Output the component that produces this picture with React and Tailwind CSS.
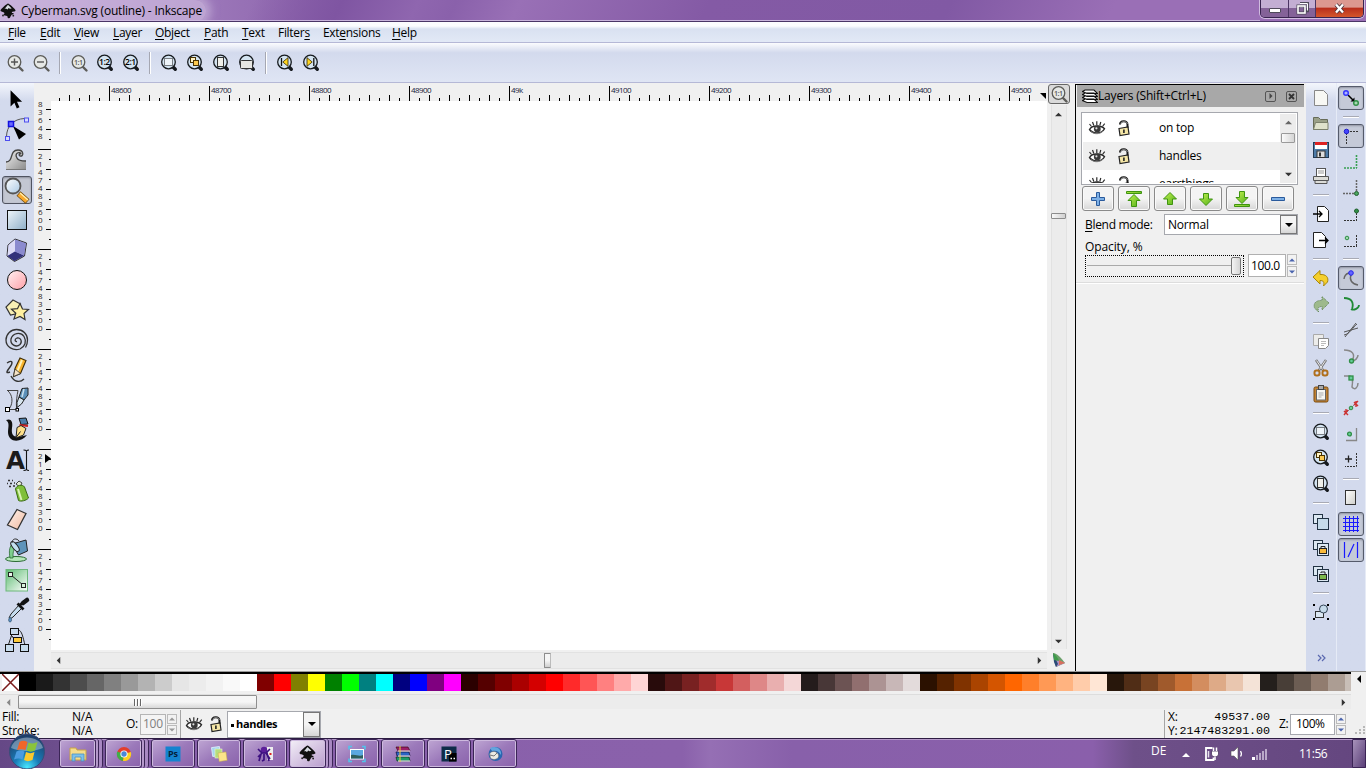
import clsx from "clsx";

const UI_FONT = "font-['Open_Sans','Noto_Sans',sans-serif]";

const menus = [
  { label: "File", key: 0, w: "w-[32px]" },
  { label: "Edit", key: 0, w: "w-[34px]" },
  { label: "View", key: 0, w: "w-[39px]" },
  { label: "Layer", key: 0, w: "w-[42px]" },
  { label: "Object", key: 0, w: "w-[49px]" },
  { label: "Path", key: 0, w: "w-[38px]" },
  { label: "Text", key: 0, w: "w-[36px]" },
  { label: "Filters", key: 6, w: "w-[45px]" },
  { label: "Extensions", key: 3, w: "w-[69px]" },
  { label: "Help", key: 0, w: "w-[30px]" },
];

const palette = (
  "000000 1a1a1a 333333 4d4d4d 666666 808080 999999 b3b3b3 cccccc e6e6e6 ececec f2f2f2 f9f9f9 ffffff " +
  "800000 ff0000 808000 ffff00 008000 00ff00 008080 00ffff 000080 0000ff 800080 ff00ff " +
  "2b0000 550000 800000 aa0000 d40000 ff0000 ff2a2a ff5555 ff8080 ffaaaa ffd5d5 " +
  "280b0b 501616 782121 a02c2c c83737 d35f5f de8787 e9afaf f4d7d7 " +
  "241c1c 483737 6c5353 916f6f ac9393 c8b7b7 e3dbdb " +
  "2b1100 552200 803300 aa4400 d45500 ff6600 ff7f2a ff9955 ffb380 ffccaa ffe6d5 " +
  "28170b 502d16 784421 a05a2c c87137 d38d5f deaa87 e9c6af f4e3d7 " +
  "241f1c 483e37 6c5d53 917c6f ac9d93 c8beb7"
).split(" ");

/* ---------- icons ---------- */

function Svg({ size = 24, className, children }) {
  return (
    <svg
      width={size}
      height={size}
      viewBox={`0 0 ${size} ${size}`}
      fill="none"
      className={clsx("shrink-0", className)}
    >
      {children}
    </svg>
  );
}

// shared lens used by every zoom command
function Lens({ children, off }) {
  const line = off ? "#5c5c58" : "#161a1e";
  return (
    <Svg>
      <path
        d={off ? "M15 15l4.500 4.500" : "M16 16l2.300 2.300"}
        stroke={line}
        strokeWidth={off ? 2.4 : 3.4}
        strokeLinecap="round"
      />
      <circle cx="11.500" cy="11" r={off ? 6.3 : 6.8} fill={off ? "#e6e8e6" : "#d4e4f1"} stroke={line} strokeWidth="1.300" />
      {children}
    </Svg>
  );
}

function LensText({ text, off }) {
  return (
    <Lens off={off}>
      <text
        x="11.300"
        y={off ? 13.5 : 14}
        textAnchor="middle"
        fontSize={off ? 7 : 8.5}
        fontWeight="600"
        letterSpacing="-.5"
        fontFamily="Open Sans, sans-serif"
        fill={off ? "#555" : "#000"}
      >
        {text}
      </text>
    </Lens>
  );
}

const ZoomIn = () => <Lens off><path d="M8 11h7M11.500 7.500v7" stroke="#555" strokeWidth="1.400" /></Lens>;
const ZoomOut = () => <Lens off><path d="M8 11h7" stroke="#555" strokeWidth="1.400" /></Lens>;
const ZoomSel = () => <Lens><rect x="7.500" y="7.500" width="8" height="7" fill="#eef4f9" stroke="#111" strokeDasharray="1 1" /></Lens>;
const ZoomDraw = () => (
  <Lens>
    <rect x="7.500" y="6.500" width="5" height="5" fill="#fff3c4" stroke="#4a3300" />
    <rect x="10.500" y="9.500" width="5" height="5" fill="#fcc94f" stroke="#4a3300" />
  </Lens>
);
const ZoomPage = () => <Lens><rect x="8.500" y="6.500" width="6" height="9" fill="#f0f0ea" stroke="#333" /></Lens>;
const ZoomWidth = () => <Lens><rect x="5.500" y="9.500" width="12" height="8" rx="1" fill="#e6e6e2" stroke="#333" /></Lens>;
const ZoomPrev = () => <Lens><path d="M8.500 7v8" stroke="#111" strokeWidth="1.300" /><path d="M15 6.700v8.600L9.800 11z" fill="#ffd51e" stroke="#332600" strokeWidth=".8" /></Lens>;
const ZoomNext = () => <Lens><path d="M14.800 7v8" stroke="#111" strokeWidth="1.300" /><path d="M8 6.700v8.600l5.200-4.300z" fill="#ffd51e" stroke="#332600" strokeWidth=".8" /></Lens>;

const Inkscape = ({ size = 16 }) => (
  <svg width={size} height={size} viewBox="0 0 16 16">
    <path d="M8 .5c1 0 7.500 5.500 7.500 7.100 0 1.300-3.700.9-3.700 1.900 0 .7 2 .5 2 1.300 0 .9-2.600.5-2.600 1.500 0 1-.9 1.200-1.100 2.200-.2.800-1.300 1.100-2.100.6-1-.6.2-1.500-1-2.100-.9-.5-3.400-.2-3.400-1.300 0-.9 1.300-1.100.8-1.800C3.700 9 .5 8.900.5 7.600.5 6 7 .5 8 .5z" fill="#111" />
    <path d="M8 1.800l3.700 3.600-1.800.4-1.300-.7-1 1.400-1.800-.9-1.300.4z" fill="#d8dce2" />
    <circle cx="3" cy="12.500" r=".9" fill="#222" />
    <circle cx="13.300" cy="12.700" r=".9" fill="#222" />
  </svg>
);

const Eye = () => (
  <Svg size={18}>
    <path d="M1.500 10.500C4 6 13.500 6 16.500 9.800c-2.500 5-11.500 5.700-15 .7z" fill="#fff" stroke="#2a2a2a" strokeWidth="1.400" />
    <circle cx="9.300" cy="10" r="3.400" fill="#3a3a3a" />
    <circle cx="8.400" cy="9.300" r="1.100" fill="#ddd" />
    <path d="M3.500 7.500L1.500 5M5.800 6.500L4.500 3M8.800 6V2.300M11.800 6.300L12.800 3M14.500 7.500l2.200-2.800" stroke="#2a2a2a" strokeWidth="1.200" />
    <path d="M3 12.500c3 3 9 3 12-.5" stroke="#777" />
  </Svg>
);

const Lock = () => (
  <Svg size={18}>
    <path d="M5 5.500C5 1.500 12.500.8 12.500 5.500V9" stroke="#1c1c1c" strokeWidth="2" />
    <path d="M5.500 4.500C6.500 2 12 1.800 12.400 5" stroke="#ccc" strokeWidth=".6" />
    <path d="M4 9.500l9-1.500 1 7-9 1.500z" fill="#f5e6a6" stroke="#222" strokeWidth="1.200" />
    <path d="M8.900 10.500v3.500" stroke="#222" strokeWidth="1.600" />
  </Svg>
);

const LayersIcon = () => (
  <Svg size={16}>
    <path
      d="M.5 12.500L3 11h9l3.500 3.500H5zM.5 9.500L3 8h9l3.500 3.500H5zM.5 6.500L3 5h9l3.500 3.500H5zM.5 3.500L3 2h9l3.500 3.500H5z"
      fill="#fff"
      stroke="#111"
      strokeWidth="1.100"
    />
  </Svg>
);

/* ---------- toolbox ---------- */

const tools = [
  // selector
  <path d="M11 5v17l4-4 2.500 6 2.800-1.300-2.600-5.700H23z" fill="#000" transform="translate(0 .500) scale(.96)" />,
  // node editor
  <>
    <path d="M6.500 22c0-11 7-18 18-18.500" stroke="#555" />
    <path d="M13 11l13 8-7 5.500z" fill="#000" />
    <rect x="8.500" y="6.500" width="5" height="5" fill="#6b6bff" stroke="#1111e0" strokeWidth="1.500" />
    <rect x="24.500" y="3" width="4" height="4" fill="#d5d9ff" stroke="#4d4dee" />
    <rect x="5.500" y="21.500" width="4" height="4" fill="#d5d9ff" stroke="#4d4dee" />
  </>,
  // tweak
  <>
    <path d="M6 17c8 0 3-12 12-12 6 0 6 7 2 6-2-1 0-3 1-2-1-3-7-1-4 4 1 3 5 3 9 3v9H6z" fill="url(#wave)" />
    <path d="M6 17c8 0 3-12 12-12 6 0 6 7 2 6-2-1 0-3 1-2-1-3-7-1-4 4 1 3 5 3 9 3" stroke="#444" strokeWidth="1.300" />
    <path d="M6 24.500h20" stroke="#777" />
  </>,
  // zoom
  <>
    <path d="M18.500 18.500l9 8" stroke="#6b4a12" strokeWidth="6" />
    <path d="M19 19l8 7" stroke="#f9a92c" strokeWidth="4.500" />
    <path d="M20 18l8 7" stroke="#fff0b0" strokeWidth="1.200" />
    <circle cx="13" cy="11" r="7.500" fill="url(#glass)" stroke="#555" strokeWidth="1.800" />
  </>,
  // rectangle
  <rect x="7.500" y="5.500" width="19" height="19" fill="url(#steel)" stroke="#111" />,
  // 3d box
  <>
    <path d="M15 4l11.500 4-2 13-10 5.500-7.500-5.500 1-11z" fill="#9b9bdc" stroke="#333" />
    <path d="M15 4.500v12l-7.500 4.500 1-11z" fill="#dcdcf6" />
    <path d="M15 16.500l9 4-9.500 5.500-7-5z" fill="#32327a" />
    <path d="M15 4.500l11 4-2 12-9-4z" fill="#8b8bcf" />
  </>,
  // ellipse
  <circle cx="17" cy="15" r="9.500" fill="url(#pink)" stroke="#111" />,
  // star
  <>
    <path d="M13 5l7.500 4-1 9-9 2-4.500-8z" fill="#f8efb4" stroke="#333" strokeWidth="1.200" />
    <path d="M20 8.500l2.500 5.500 6 .5-4.500 4 1 6-5-3-6 2.500 1.800-5.800-4.300-4 6-.5z" fill="#fff0a0" stroke="#333" strokeWidth="1.200" />
  </>,
  // spiral
  <path d="M17 16.500c-2 .5-3-2.500 0-3.500 4-1 5.500 4 3 6.500-4 3.500-10 0-9-5.500 1.500-6 9.500-7.500 13-2.500 3 5 1 10-4 12.500C13 26 6 22 6 15c0-6 5-10.500 10.500-10.500C23 4.500 27.500 9 27.500 15c0 3-.5 5-2 7.500" stroke="#333" strokeWidth="1.300" />,
  // pencil
  <>
    <path d="M7 8c6-4 6 0 3 4s-5 7 0 5M11 21c3 6 9 7 13 3" stroke="#333" strokeWidth="1.400" />
    <path d="M20 3l6 2.500-5.500 13-7 3 1.500-8z" fill="#f7b22c" stroke="#3d2c05" strokeWidth="1.100" />
    <path d="M22 5l-5 12" stroke="#fff1b5" strokeWidth="2" />
    <path d="M15 14l5.500 4.500-7 3z" fill="#f5e2c4" stroke="#333" strokeWidth=".8" />
  </>,
  // bezier
  <>
    <path d="M7 5.500h11M7.500 5.500c5 4 6 12 2 18M18 5.500c-1 5-2 11-1.500 18M9 24.500h8" stroke="#444" />
    <path d="M22 3.500l6-.5v7l-4 5-5-3z" fill="#5c8fb8" stroke="#222" />
    <path d="M24 4l-2 8" stroke="#c9dfee" strokeWidth="1.500" />
    <path d="M19 12l5 3-2.500 4-4.500 3.500 0-5z" fill="#d8e6f0" stroke="#222" />
    <rect x="5.500" y="22.500" width="4" height="4" fill="#fff" stroke="#000" />
    <rect x="16" y="23.500" width="2.500" height="2.500" fill="#fff" stroke="#000" />
  </>,
  // calligraphy
  <>
    <path d="M6 5c6-2.500 7 3 6 8-1 8 2 11 15 7-6 8-19 8-19-3 0-5 2-9-2-12z" fill="#111" />
    <path d="M19 3.500l7-.5 2 6-7 .5z" fill="#4b7da8" stroke="#111" />
    <path d="M19.500 10l8.500 1" stroke="#c22" strokeWidth="1.800" />
    <path d="M17 12.500l4-2 5 3-2.500 6.500-7.500 3z" fill="#ffe08a" stroke="#222" />
    <path d="M16 22.500l4.500-6" stroke="#222" />
  </>,
  // text
  <>
    <path d="M26.500 5.500v19M23.500 5c1.500 0 2.500.3 3 1 .5-.7 1-1 2.500-1M23.500 25.500c1.500 0 2.500-.3 3-1 .5.700 1 1 2.500 1" stroke="#111" strokeWidth="1.100" />
    <text x="6" y="23.500" fontFamily="DejaVu Sans, sans-serif" fontWeight="700" fontSize="24" textLength="19" lengthAdjust="spacingAndGlyphs" fill="#1b1b1b">A</text>
  </>,
  // spray
  <>
    <path d="M8 5.500h2M12 5.500h1M7 8.500h1M10 8.500h2M14 8h1M9 11.500h2M13 11h2" stroke="#333" strokeWidth="1.600" />
    <path d="M16 9l3-3 3 2-2 4z" fill="#e4ecd8" stroke="#444" />
    <path d="M15.500 14c1-4 7-5 9-2l4 11c-2 2.500-8 4-10 2.500z" fill="#7fbf3a" stroke="#3a6b12" />
    <path d="M18 14l3.500 11" stroke="#d9f2b4" strokeWidth="2" />
  </>,
  // eraser
  <path d="M17 4.500l9 4-8.500 16-10-4.500z" fill="url(#eraser)" stroke="#333" strokeWidth="1.300" />,
  // bucket
  <>
    <ellipse cx="16" cy="24" rx="10.500" ry="2.500" fill="#b4e8b9" stroke="#2b6b33" />
    <path d="M12 9c-3 4-3 8-2 14h3c0-5 0-8 3-11z" fill="#7fcf8e" stroke="#2b6b33" strokeWidth=".8" />
    <path d="M12 9l14-4 1.500 11-9 4z" fill="#5e94ba" stroke="#222" />
    <ellipse cx="15" cy="11.500" rx="2.500" ry="6" transform="rotate(-38 15 11.500)" fill="#c4dff0" stroke="#222" />
    <path d="M12 8c0-5 5-5 7-2" stroke="#333" />
  </>,
  // gradient
  <>
    <rect x="6" y="4.500" width="21.500" height="21.500" fill="url(#green)" stroke="#6cb77b" />
    <path d="M11 10l12 10" stroke="#222" />
    <rect x="8.500" y="7.500" width="4" height="4" fill="#e7f7e9" stroke="#222" />
    <rect x="21.500" y="18.500" width="4" height="4" fill="#d9f2dc" stroke="#222" />
  </>,
  // dropper
  <>
    <path d="M19 10l3 3-9 9-3 2-1-1 2-4z" fill="#c6dcee" stroke="#222" />
    <path d="M17.500 8.500l6 6M20 10l5-4" stroke="#111" strokeWidth="2.800" />
    <path d="M23 8l4-3" stroke="#111" strokeWidth="4.500" strokeLinecap="round" />
    <path d="M10 22c3 3 1 5 0 5s-2.500-2 0-5z" fill="#5d8fc4" stroke="#245" strokeWidth=".6" />
  </>,
  // connector
  <>
    <path d="M12 9L8 21M18 5c4 0 5 8 7 15M12 11l4 6" stroke="#222" />
    <rect x="10.500" y="3.500" width="8" height="6" fill="#c7dbec" stroke="#111" />
    <rect x="13.500" y="12.500" width="8" height="5" fill="#ffcc3c" stroke="#111" />
    <rect x="5.500" y="19.500" width="8" height="7" fill="#c7dbec" stroke="#111" />
    <rect x="20.500" y="19.500" width="8" height="7" fill="#c7dbec" stroke="#111" />
  </>,
];

function Gradients() {
  const defs = [
    ["glass", "#ffffff", "#a9c8e4"],
    ["steel", "#eef5fa", "#8fafc8"],
    ["pink", "#fff2f2", "#ff9fa8"],
    ["eraser", "#fff4ee", "#f0b9a0"],
    ["green", "#5dbb72", "#ffffff"],
    ["wave", "#f2f2f2", "#8a8a8a"],
    ["leaf", "#c4f250", "#52b01a"],
    ["paper", "#ffffff", "#cfcfca"],
  ];
  return (
    <svg width="0" height="0" className="absolute">
      <defs>
        {defs.map(([id, from, to]) => (
          <linearGradient key={id} id={id} x1="0" y1="0" x2="1" y2="1">
            <stop offset="0" stopColor={from} />
            <stop offset="1" stopColor={to} />
          </linearGradient>
        ))}
      </defs>
    </svg>
  );
}

function Toolbox() {
  return (
    <div className="flex w-[34px] shrink-0 flex-col bg-linear-to-b from-[#f3f6fc] via-[#d3daed] via-3% to-[#d3daed] pt-[2px]">
      {tools.map((art, i) => (
        <div key={i} className="relative flex h-[30px] w-[34px] shrink-0 items-center">
          {i === 3 && (
            <div className="absolute inset-x-[2px] top-[1px] h-[28px] rounded-[3px] border border-[#4f5360] bg-[#c3c7d2] shadow-[inset_0_1px_2px_#8d909c]" />
          )}
          <svg width="34" height="30" viewBox="0 0 34 30" fill="none" className="relative">
            {art}
          </svg>
        </div>
      ))}
    </div>
  );
}

/* ---------- top bars ---------- */

function TitleBar() {
  return (
    <div className="flex h-[22px] items-start justify-between overflow-hidden border-b border-[#4a3566] bg-linear-to-r from-[#b79bd0] from-0% via-[#8a60aa] via-25% to-[#a06fb9]">
      <div className="flex h-full flex-1 items-start bg-[linear-gradient(115deg,transparent_14%,#ffffff00_20%,#7f55a2_27%,#8f66af_33%,#8a61ab_36%,#9970b6_41%,#845aa5_56%,#8159a4_75%,#9a6fb6_88%)] shadow-[inset_0_-1px_0_#c9b4dc]">
        <div className="flex items-center gap-[5px] rounded-r-full bg-[#d3c2e2]/60 pr-1 shadow-[0_0_8px_5px_#d3c2e290]">
          <Inkscape />
          <span className="h-[22px] text-[12px] leading-[22px] tracking-[-0.2px] text-black">Cyberman.svg (outline) - Inkscape</span>
        </div>
      </div>
      <div className="flex h-[22px] bg-[#9a6fb6] pr-[2px]">
        <div className="flex h-[18px] overflow-hidden rounded-b-[5px] border border-t-0 border-[#38244f] shadow-[0_0_0_1px_#d0bcdf]">
          <div className="flex w-[28px] items-center justify-center border-r border-[#4b3562] bg-linear-to-b from-[#c3aed3] from-45% to-[#846298] to-50% pt-[3px]">
            <div className="h-[5px] w-[12px] rounded-[1px] border border-[#4f4a5a] bg-white" />
          </div>
          <div className="flex w-[27px] items-center justify-center border-r border-[#4b3562] bg-linear-to-b from-[#c3aed3] from-45% to-[#846298] to-50%">
            <svg width="13" height="13" viewBox="0 0 13 13" fill="none">
              <path d="M4 1h8v8h-2" stroke="#4f4a5a" strokeWidth="2.500" />
              <path d="M4 1.500h7.500v7" stroke="#fff" />
              <rect x="2" y="4" width="7" height="7" stroke="#4f4a5a" strokeWidth="3" />
              <rect x="2" y="4" width="7" height="7" stroke="#fff" strokeWidth="1.600" />
            </svg>
          </div>
          <div className="flex w-[47px] items-center justify-center bg-linear-to-b from-[#dc9890] from-40% via-[#b92f1d] via-50% to-[#d4562c]">
            <svg width="13" height="11" viewBox="0 0 13 11">
              <path d="M3 1.500l7 8M10 1.500l-7 8" stroke="#4d3840" strokeWidth="4" />
              <path d="M3 1.500l7 8M10 1.500l-7 8" stroke="#fff" strokeWidth="2.300" />
            </svg>
          </div>
        </div>
      </div>
    </div>
  );
}

function MenuBar() {
  return (
    <div className="flex h-[21px] items-center border-b border-[#b5b8d6] bg-linear-to-b from-[#fbfcfe] from-20% via-[#d9e1f1] via-35% to-[#e2e9f6] pt-[2px] pl-[8px] text-[12px] tracking-[-0.3px]">
      {menus.map(({ label, key, w }) => (
        <div key={label} className={clsx("whitespace-nowrap", w)}>
          {label.slice(0, key)}
          <span className="underline underline-offset-2">{label[key]}</span>
          {label.slice(key + 1)}
        </div>
      ))}
    </div>
  );
}

const commands = [
  <ZoomIn />, <ZoomOut />, null,
  <LensText text="1:1" off />, <LensText text="1:2" />, <LensText text="2:1" />, null,
  <ZoomSel />, <ZoomDraw />, <ZoomPage />, <ZoomWidth />, null,
  <ZoomPrev />, <ZoomNext />,
];

function CommandRow() {
  return (
    <div className="flex h-[40px] items-center border-b border-[#b5b8d6] bg-linear-to-b from-[#fbfcfe] via-[#d3daed] via-25% to-[#dfe5f4] pt-px pl-[2px]">
      {commands.map((icon, i) =>
        icon ? (
          <div key={i} className="flex h-[26px] w-[26px] items-center justify-center">{icon}</div>
        ) : (
          <div key={i} className="flex w-[12px] justify-center">
            <div className="h-[22px] w-[2px] border-r border-white bg-[#a5a7b2]" />
          </div>
        )
      )}
    </div>
  );
}

/* ---------- canvas ---------- */

const hLabels = ["48600", "48700", "48800", "48900", "49k", "49100", "49200", "49300", "49400", "49500"];
const vLabels = ["2147483600", "2147483500", "2147483400", "2147483300", "2147483200"];

function HorizontalRuler() {
  return (
    <div className="flex h-[18px] items-end overflow-hidden bg-[#f0f0f0] pl-[25px]">
      {Array.from({ length: 98 }, (_, i) => {
        const major = i % 10 === 5;
        return (
          <div
            key={i}
            className={clsx(
              "w-[10px] shrink-0 border-l border-black whitespace-nowrap pl-px text-[8px] leading-[8px] tracking-[-0.6px] text-[#16203c]",
              major ? "h-[15px]" : i % 2 ? "h-[6px]" : "h-[3px]"
            )}
          >
            {major && hLabels[(i - 5) / 10]}
          </div>
        );
      })}
      <svg width="7" height="7" viewBox="0 0 7 7" className="mb-px ml-px shrink-0">
        <path d="M0 0h6v6z" fill="#000" />
      </svg>
    </div>
  );
}

function VerticalTicks({ count, first }) {
  return (
    <div className={clsx("flex flex-1 flex-col items-end", first && "pt-2")}>
      {Array.from({ length: count }, (_, i) => {
        const long = first ? i % 2 === 0 : i % 2 === 0 && i > 0;
        return (
          <div
            key={i}
            className={clsx(
              "h-[10px] shrink-0 border-t border-black",
              !first && i === 0 ? "w-[13px]" : long ? "w-[5px]" : "w-[2px]"
            )}
          />
        );
      })}
    </div>
  );
}

// the number is wrapped one digit per line
function Digits({ text }) {
  return (
    <div className="-mr-[8px] ml-[3px] w-[5px] text-[8px] leading-[8px] break-all text-[#2c2320]">
      {text}
    </div>
  );
}

function VerticalRuler() {
  return (
    <div className="relative flex w-[17px] shrink-0 flex-col bg-[#f0f0f0]">
      <div className="flex h-[48px] shrink-0 pl-[1px]">
        <div className="-mt-px"><Digits text="83648" /></div>
        <VerticalTicks count={4} first />
      </div>
      {vLabels.map((label) => (
        <div key={label} className="flex h-[100px] shrink-0 pl-[1px]">
          <div className="pt-[3px]"><Digits text={label} /></div>
          <VerticalTicks count={10} />
        </div>
      ))}
      {/* pointer position marker */}
      <svg width="6" height="9" viewBox="0 0 6 9" className="absolute top-[353px] left-[11px]">
        <path d="M0 0l6 4.500L0 9z" fill="#000" />
      </svg>
    </div>
  );
}

const arrows = {
  up: "M0 6l4-4 4 4z",
  down: "M0 2l4 4 4-4z",
  left: "M6 0L2 4l4 4z",
  right: "M2 0l4 4-4 4z",
};

function Arrow({ dir, size = 8, color = "#333" }) {
  return (
    <svg width={size} height={size} viewBox="0 0 8 8" className="shrink-0">
      <path d={arrows[dir]} fill={color} />
    </svg>
  );
}

function CanvasArea() {
  return (
    <div className="flex w-[1036px] shrink-0 bg-[#f0f0f0]">
      <div className="flex w-[1013px] flex-col">
        <HorizontalRuler />
        <div className="flex h-[549px]">
          <VerticalRuler />
          <div className="flex-1 bg-white" />
        </div>
        <div className="pt-[2px] pl-[17px]">
          <div className="flex h-[17px] items-center justify-between border-y border-[#e2e2e2] bg-[#ececec] px-[4px]">
            <Arrow dir="left" size={7} />
            <div className="mr-[3px] h-[15px] w-[7px] rounded-[1px] border border-r-[#bbb] border-[#8c8c8c] bg-linear-to-b from-[#f5f5f5] from-50% to-[#cfcfcf]" />
            <Arrow dir="right" size={7} />
          </div>
        </div>
      </div>
      <div className="flex w-[23px] flex-col items-center">
        <div className="mt-px flex h-[20px] w-[22px] shrink-0 items-center justify-center overflow-hidden rounded-[3px] border border-[#666] bg-[#dadada]">
          <LensText text="1:1" off />
        </div>
        <div className="mt-[1px] flex h-[544px] w-[16px] shrink-0 flex-col items-center border-x border-[#e2e2e2] bg-[#ececec] pt-[6px] pb-[4px]">
          <Arrow dir="up" size={7} />
          <div className="mt-[95px] -ml-px h-[6px] w-[15px] shrink-0 rounded-[1px] border border-[#8c8c8c] bg-linear-to-r from-[#f8f8f8] to-[#d0d0d0]" />
          <div className="flex-1" />
          <Arrow dir="down" size={7} />
        </div>
        <svg width="16" height="16" viewBox="0 0 16 16" className="mt-[3px]">
          <path d="M2 1c4 0 9 6 12 10L5 15z" fill="#6ba06a" />
          <path d="M3 6l11 5-9 4z" fill="#b08fc2" />
          <path d="M8 8l6 3-6 2z" fill="#d8705a" />
          <path d="M2 1l1 9 2 5 2-3z" fill="#2c4c78" />
          <path d="M2 1c3 2 5 5 6 8l-5-1z" fill="#3f9c4a" />
        </svg>
      </div>
    </div>
  );
}

/* ---------- layers dock ---------- */

const layerButtons = [
  <path d="M7.500 2.500h3v5h5v3h-5v5h-3v-5h-5v-3h5z" fill="#7db0e6" stroke="#2a5a9c" />,
  <><path d="M1.500 1.500h15v2h-15z" fill="url(#leaf)" stroke="#3f9410" /><path d="M9 4.500l6 6h-3.500v6h-5v-6H3z" fill="url(#leaf)" stroke="#3f9410" /></>,
  <path d="M9 2.500l6.500 6.500h-4v5.500h-5V9h-4z" fill="url(#leaf)" stroke="#3f9410" />,
  <path d="M9 15.500L15.500 9h-4V3.500h-5V9h-4z" fill="url(#leaf)" stroke="#3f9410" />,
  <><path d="M1.500 14.500h15v2h-15z" fill="url(#leaf)" stroke="#3f9410" /><path d="M9 13.500l6-6h-3.500v-6h-5v6H3z" fill="url(#leaf)" stroke="#3f9410" /></>,
  <path d="M2.500 7.500h13v3h-13z" fill="#7db0e6" stroke="#2a5a9c" />,
];

function Spinner({ dim }) {
  const color = dim ? "#999" : "#4a64ad";
  return (
    <div className="flex w-[10px] flex-col gap-px">
      <div className="flex flex-1 items-center justify-center border border-[#bbb] bg-[#f2f2f2]"><Arrow dir="up" size={6} color={color} /></div>
      <div className="flex flex-1 items-center justify-center border border-[#bbb] bg-[#f2f2f2]"><Arrow dir="down" size={6} color={color} /></div>
    </div>
  );
}

function LayersDock() {
  return (
    <div className="flex w-[236px] shrink-0 bg-[#f0f0f0] pt-px pl-[5px]">
      <div className="flex w-[229px] flex-col border-t border-l border-black">
        <div className="ml-px flex h-[22px] shrink-0 items-center bg-[#a8a8a8] pl-[5px] text-[12px]">
          <LayersIcon />
          <span className="flex-1 tracking-[-0.18px]">Layers (Shift+Ctrl+L)</span>
          <div className="flex h-[11px] w-[11px] items-center justify-center rounded-[2px] border border-[#555]"><Arrow dir="right" size={6} color="#444" /></div>
          <div className="mr-[7px] ml-[10px] flex h-[11px] w-[11px] items-center justify-center rounded-[2px] border border-[#555]">
            <svg width="7" height="7" viewBox="0 0 7 7"><path d="M1 1l5 5M6 1L1 6" stroke="#333" strokeWidth="1.800" /></svg>
          </div>
        </div>
        <div className="flex h-[177px] shrink-0 flex-col border-b border-white pt-[5px] pl-[5px] shadow-[0_-1px_0_#ddd_inset]">
          <div className="flex h-[73px] w-[217px] border border-[#a6a8ae] bg-white p-px">
            <div className="h-full flex-1 overflow-hidden">
              {["on top", "handles", "earrthings"].map((name, i) => (
                <div key={name} className={clsx("flex h-[28px] items-center pl-[5px] text-[12px] tracking-[-0.25px]", i === 1 && "bg-[#efefef]")}>
                  <Eye />
                  <div className="ml-[9px]"><Lock /></div>
                  <span className="ml-[26px]">{name}</span>
                </div>
              ))}
            </div>
            <div className="flex w-[16px] flex-col items-center bg-[#ececec] pt-[5px] pb-[5px]">
              <Arrow dir="up" size={7} color="#666" />
              <div className="mt-[7px] h-[10px] w-[14px] shrink-0 rounded-[1px] border border-[#999] bg-linear-to-r from-[#fafafa] to-[#d5d5d5]" />
              <div className="mt-auto flex"><Arrow dir="down" size={7} /></div>
            </div>
          </div>
          <div className="mt-px flex gap-[4px] pl-px">
            {layerButtons.map((art, i) => (
              <div key={i} className="flex h-[25px] w-[32px] items-center justify-center rounded-[3px] border border-[#8a8a8a] bg-linear-to-b from-[#f4f4f4] from-50% to-[#d6d6d6] shadow-[inset_0_0_0_1px_#fafafa]">
                <Svg size={18}>{art}</Svg>
              </div>
            ))}
          </div>
          <div className="mt-[3px] flex h-[21px] items-center pl-[4px] text-[12px]">
            <span className="w-[79px] tracking-[-0.3px]"><span className="underline underline-offset-2">B</span>lend mode:</span>
            <div className="flex h-[21px] w-[134px] items-center border border-[#a6a8ae] bg-white pl-[3px]">
              <span className="flex-1 tracking-[-0.2px]">Normal</span>
              <div className="flex h-[19px] w-[17px] items-center justify-center border border-[#777] bg-linear-to-b from-[#f4f4f4] from-50% to-[#d6d6d6]">
                <Arrow dir="down" color="#000" />
              </div>
            </div>
          </div>
          <div className="mt-[4px] h-[15px] pl-[4px] text-[12px] leading-[15px] tracking-[-0.1px]">Opacity, %</div>
          <div className="flex items-center pl-[4px]">
            <div className="flex h-[22px] w-[159px] items-center border border-dotted border-black pl-px">
              <div className="h-px flex-1 bg-[#aaa]" />
              <div className="mr-[2px] h-[18px] w-[10px] rounded-[2px] border border-[#777] bg-linear-to-r from-[#f4f4f4] to-[#d4d4d4]" />
            </div>
            <div className="ml-[4px] flex h-[23px] w-[49px] gap-px">
              <div className="flex flex-1 items-center border border-[#b0b0b0] bg-white pl-[2px] text-[12px] tracking-[-0.4px]">100.0</div>
              <Spinner />
            </div>
          </div>
        </div>
      </div>
    </div>
  );
}

/* ---------- right hand bars ---------- */

const commandBar = [
  <path d="M5.500 4.500h9l4 4v11h-13z" fill="#f8f8f4" stroke="#888" />,
  <><path d="M4.500 5.500h5l2 2h7v10h-14z" fill="#9aa088" stroke="#666b58" /><path d="M6.500 10.500h12.500v7h-14.500z" fill="#dfe2cc" stroke="#7b806c" /></>,
  <><rect x="4.500" y="4.500" width="15" height="15" fill="#4d7ba8" stroke="#223a55" /><rect x="6" y="4" width="12" height="3" fill="#d22" /><rect x="6" y="7" width="12" height="4" fill="#fff" /><rect x="8" y="13" width="8" height="6.500" fill="#ddd" stroke="#333" /><rect x="10" y="14.500" width="2" height="4" fill="#333" /></>,
  <><rect x="7.500" y="4.500" width="9" height="8" fill="#fff" stroke="#555" /><path d="M9 7h6M9 9h6" stroke="#999" /><path d="M4.500 12.500h15v4h-15zM6 16.500h12v3H6z" fill="#dcdcd8" stroke="#555" /></>,
  null,
  <><path d="M8.500 4.500h7l4 4v11h-11z" fill="#fff" stroke="#222" /><path d="M4 12h9M10 9l3 3-3 3" stroke="#000" strokeWidth="1.300" /></>,
  <><path d="M4.500 4.500h8l4 4v11h-12z" fill="#fff" stroke="#222" /><path d="M10 12.500h9M16 9.500l3 3-3 3" stroke="#000" strokeWidth="1.300" /></>,
  null,
  <path d="M4 11l7-6.500v4c6-.5 9 3 7.500 7.500l-4 4c1-4 0-5.500-3.500-5.500v3.500z" fill="#f5cf2c" stroke="#a8860a" />,
  <path d="M20 11l-7-6.500v4c-6-.5-9 3-7.500 7.500l4 4c-1-4 0-5.500 3.500-5.500v3.500z" fill="#9db98c" stroke="#5c8050" strokeDasharray="1 1" />,
  null,
  <><path d="M4.500 4.500h10v11h-10z" fill="#ececea" stroke="#aaa" /><path d="M9.500 8.500h10v7l-3 3h-7z" fill="#fff" stroke="#888" /><path d="M12 11.500h5M12 13.500h5M12 15.500h3" stroke="#bbb" /></>,
  <><path d="M7 4l7.500 11M17 4L9.500 15" stroke="#777" strokeWidth="2.500" /><path d="M7.500 4.500l6 9M16.500 4.500l-6 9" stroke="#e8e8e8" /><rect x="5.500" y="14.500" width="5" height="5" rx="2" stroke="#b06f1c" strokeWidth="2" /><rect x="13.500" y="14.500" width="5" height="5" rx="2" stroke="#b06f1c" strokeWidth="2" /></>,
  <><rect x="5" y="5" width="14" height="15" rx="1.500" fill="#c08234" stroke="#7a4a0e" /><rect x="7.500" y="7.500" width="9" height="10.500" fill="#f6f6f2" stroke="#666" /><rect x="9.500" y="3.500" width="5" height="4" fill="#aaa" stroke="#444" /><path d="M9.500 11h5M9.500 13h5M9.500 15h3" stroke="#aaa" /></>,
  null,
  "sel", "draw", "page",
  null,
  <><rect x="4.500" y="4.500" width="9" height="9" fill="#dce8f2" stroke="#234" /><rect x="8.500" y="8.500" width="11" height="11" fill="#c6dbea" stroke="#234" /></>,
  <><rect x="4.500" y="4.500" width="9" height="9" fill="#dce8f2" stroke="#234" /><rect x="8.500" y="7.500" width="11" height="12" fill="#dce8f2" stroke="#234" /><path d="M12 13v-2.500h4V13" stroke="#222" /><rect x="10.500" y="12.500" width="7" height="5" fill="#f8b93a" stroke="#222" /></>,
  <><rect x="4.500" y="4.500" width="9" height="9" fill="#dce8f2" stroke="#234" /><rect x="8.500" y="7.500" width="11" height="12" fill="#dce8f2" stroke="#234" /><path d="M12 11v-1h4V13" stroke="#222" /><rect x="10.500" y="12.500" width="7" height="5" fill="#7cb84c" stroke="#222" /></>,
  null,
  <><path d="M4 4h2v2H4zM18 4h2v2h-2zM4 18h2v2H4zM18 18h2v2h-2z" fill="#000" /><rect x="6.500" y="11.500" width="8" height="6" fill="#dce8f2" stroke="#333" /><circle cx="14.500" cy="9" r="4" fill="#c6dbea" stroke="#345" /></>,
];

const G = "#2f8f46";
const snapBar = [
  { on: true, art: <><path d="M9 9l6 6" stroke="#000" strokeWidth="1.500" /><path d="M15.500 11.500v4h-4z" fill="#000" /><circle cx="7" cy="7" r="2.300" fill="#aab4ff" stroke="#33f" strokeWidth="1.400" /><circle cx="17" cy="17" r="2.300" fill="#a6d8b0" stroke={G} strokeWidth="1.400" /></> },
  null,
  { on: true, art: <><path d="M8 7.500h12M7.500 9v12" stroke="#333" strokeDasharray="2 1" /><circle cx="7.500" cy="7.500" r="2.300" fill="#44f" stroke="#22c" /></> },
  { art: <path d="M17.500 5v13M5 18h13" stroke="#37a052" strokeWidth="1.600" strokeDasharray="2 1" /> },
  { art: <><path d="M17.500 4v12M4 17.500h12" stroke="#666" strokeWidth="1.500" strokeDasharray="2 1" /><circle cx="17.500" cy="17.500" r="2" fill="#4aa760" stroke="#22602f" /></> },
  { art: <><path d="M17.500 8v10M5 18.500h13" stroke="#333" strokeDasharray="2 1" /><circle cx="17.500" cy="9" r="2" fill={G} stroke="#22602f" /></> },
  { art: <><path d="M17.500 7v12M5 18.500h13" stroke="#333" strokeDasharray="2 1" /><circle cx="8" cy="10" r="1.800" fill="#9fd8ac" stroke={G} /></> },
  null,
  { on: true, art: <><path d="M5 13c1-7 8-7 7-4-2 5 1 9 7 10" stroke="#666" strokeWidth="1.400" /><circle cx="12" cy="7" r="2.300" fill="#66f" stroke="#22e" /></> },
  { art: <path d="M5 6c8 0 10 5 8 11M20 13c0 3-5 6-8 4" stroke="#1f8a35" strokeWidth="1.800" /> },
  { art: <><path d="M5 17C11 16 14 9 18 6M5 14l14-4M6 19L17 5" stroke="#555" /></> },
  { art: <><path d="M5 6c8 0 12 4 8 11M19 11c0 3-3 6-6 6" stroke="#888" strokeWidth="1.500" /><circle cx="12.500" cy="17" r="2" fill="#6c9" stroke={G} strokeWidth="1.300" /></> },
  { art: <><path d="M5 6h5c4 0 4 5 3 11 3 4 6 0 6-4" stroke="#888" strokeWidth="1.500" /><rect x="10" y="6" width="4" height="4" fill="#6c9" stroke={G} strokeWidth="1.300" /></> },
  { art: <><path d="M6 18L19 5" stroke="#888" /><path d="M5 15l4 4M5 19l4-5M15 6l4 4M15 9l4-4M7 13v5M17 5v6" stroke="#c33" strokeWidth="1.400" /><circle cx="12" cy="12" r="1.800" fill="#6c9" stroke={G} /></> },
  { art: <><path d="M17.500 6v12.500H7" stroke="#888" strokeWidth="1.300" /><circle cx="10.500" cy="12" r="1.900" fill="#6c9" stroke={G} strokeWidth="1.300" /></> },
  { art: <><path d="M17.500 5v13.500H6" stroke="#333" strokeDasharray="2 1" /><path d="M6 11h7M9.500 7.500v7" stroke="#222" strokeWidth="1.300" /></> },
  null,
  { art: <rect x="6.500" y="4.500" width="10" height="14" fill="url(#paper)" stroke="#333" /> },
  { on: true, art: <path d="M6.500 4v16M10.500 4v16M14.500 4v16M18.500 4v16M4 6.500h16M4 10.500h16M4 14.500h16M4 18.500h16" stroke="#1a1aff" /> },
  { on: true, art: <path d="M5.500 4v16M18.500 4v16M9 19l6-13" stroke="#1a1aff" strokeWidth="1.200" /> },
];

const lensIcons = { sel: <ZoomSel />, draw: <ZoomDraw />, page: <ZoomPage /> };

function BarSeparator() {
  return (
    <div className="flex h-[12px] shrink-0 items-center justify-center">
      <div className="h-[2px] w-[16px] border-b border-white bg-[#a8aab4]" />
    </div>
  );
}

function RightBars() {
  const shell = "flex shrink-0 flex-col bg-linear-to-b from-[#f3f6fc] via-[#d3daed] via-3% to-[#d3daed] pt-[2px]";
  return (
    <div className="flex flex-1 gap-px bg-[#e6ebf6]">
      <div className={clsx(shell, "w-[30px]")}>
        {commandBar.map((art, i) =>
          art ? (
            <div key={i} className="flex h-[26px] shrink-0 items-center justify-center">
              {typeof art === "string" ? lensIcons[art] : <Svg>{art}</Svg>}
            </div>
          ) : (
            <BarSeparator key={i} />
          )
        )}
        <div className="mt-auto mb-[9px] flex justify-center">
          <svg width="9" height="8" viewBox="0 0 9 8" fill="none">
            <path d="M1 1l3 3-3 3M5 1l3 3-3 3" stroke="#5b69b0" strokeWidth="1.200" />
          </svg>
        </div>
      </div>
      <div className={clsx(shell, "w-[28px]")}>
        {snapBar.map((item, i) =>
          item ? (
            <div key={i} className="flex h-[26px] shrink-0 items-center justify-center">
              <div className={clsx("flex h-[24px] w-[26px] items-center justify-center rounded-[3px]", item.on && "border border-[#555b6b] bg-[#c5cad8] shadow-[inset_0_1px_2px_#9094a2]")}>
                <Svg>{item.art}</Svg>
              </div>
            </div>
          ) : (
            <BarSeparator key={i} />
          )
        )}
      </div>
    </div>
  );
}

/* ---------- palette and status ---------- */

function Palette() {
  return (
    <div className="h-[38px] bg-[#f0f0f0]">
      <div className="flex h-[22px]">
        <div className="flex h-[19px] w-[1351px] overflow-hidden border-t-2 border-t-black pl-[2px]">
          <svg width="17" height="17" viewBox="0 0 17 17" className="shrink-0 bg-white">
            <path d="M0 0l17 17M17 0L0 17" stroke="#7a1a1a" strokeWidth="1.500" />
          </svg>
          {palette.map((c, i) => (
            <div key={i} className="h-[17px] w-[17px] shrink-0" style={{ backgroundColor: `#${c}` }} />
          ))}
        </div>
        <div className="flex flex-1 justify-center pt-[3px]"><Arrow dir="left" size={8} color="#000" /></div>
      </div>
      <div className="flex h-[15px] w-[1351px] items-center border-t border-[#ddd] bg-[#ececec] pl-[5px]">
        <Arrow dir="left" size={7} color="#888" />
        <div className="ml-[6px] flex h-[14px] w-[239px] items-center justify-center gap-px rounded-[1px] border border-[#8f8f8f] bg-linear-to-b from-[#f6f6f6] from-50% to-[#d8d8d8]">
          {[0, 1, 2].map((n) => (
            <div key={n} className="h-[7px] w-[2px] border-r border-white bg-[#666]" />
          ))}
        </div>
        <div className="ml-auto pr-[4px]"><Arrow dir="right" size={7} /></div>
      </div>
    </div>
  );
}

function StatusBar() {
  return (
    <div className="flex h-[28px] shrink-0 items-center bg-[#f0f0f0] text-[12px] leading-[14px] tracking-[-0.25px]">
      <div className="w-[70px] self-start pl-[2px]"><div>Fill:</div><div>Stroke:</div></div>
      <div className="w-[56px] self-start pl-[2px]"><div>N/A</div><div>N/A</div></div>
      <span className="w-[14px]">O:</span>
      <div className="flex h-[21px] w-[37px] gap-px">
        <div className="flex flex-1 items-center border border-[#b5b5b5] bg-[#f4f4f4] pl-[2px] text-[#808080]">100</div>
        <Spinner dim />
      </div>
      <div className="ml-[3px] h-[28px] w-px bg-[#a5a5a5]" />
      <div className="ml-[4px]"><Eye /></div>
      <div className="ml-[4px]"><Lock /></div>
      <div className="ml-[2px] flex h-[27px] w-[94px] items-center border border-[#a6a8ae] bg-white pl-[3px] text-[11px] font-bold">
        <span className="flex-1 tracking-[-0.3px]">
          <span className="mr-[2px] inline-block h-[3px] w-[3px] bg-black align-middle" />handles
        </span>
        <div className="flex h-[25px] w-[17px] items-center justify-center border border-[#777] bg-linear-to-b from-[#f4f4f4] from-50% to-[#d6d6d6]">
          <Arrow dir="down" color="#000" />
        </div>
      </div>
      <div className="ml-auto flex h-[28px] w-[106px] border-l border-[#a5a5a5] pl-[3px]">
        <div className="w-[10px]"><div>X:</div><div>Y:</div></div>
        <div className="flex-1 text-right font-['Liberation_Mono',monospace] text-[11.700px] tracking-[-0.05px] whitespace-nowrap">
          <div>49537.00</div>
          <div>2147483291.00</div>
        </div>
      </div>
      <span className="ml-[9px] w-[11px]">Z:</span>
      <div className="flex h-[21px] w-[56px] gap-px">
        <div className="flex flex-1 items-center border border-[#a6a8ae] bg-white pl-[5px] tracking-[-0.5px]">100%</div>
        <Spinner />
      </div>
      <div className="grid w-[20px] grid-cols-3 gap-px self-end pb-[4px] pl-[9px]">
        {[0, 0, 1, 0, 1, 1, 1, 1, 1].map((v, i) => (
          <div key={i} className={clsx("h-[2px] w-[2px]", v && "bg-[#b8b8b8]")} />
        ))}
      </div>
    </div>
  );
}

/* ---------- taskbar ---------- */

const apps = [
  { stack: true, art: <><path d="M1 3h6l1 2h9v10H1z" fill="#f4dc8c" stroke="#c9a545" /><path d="M3 16V9h12v7h-3v-4H6v4z" fill="#7cc1ea" stroke="#4a8fc0" strokeWidth=".8" /></> },
  { stack: true, art: <><circle cx="9" cy="9" r="7" fill="#e33e2b" /><path d="M9 9L2.300 6.500A7 7 0 0 0 8 16z" fill="#3fae49" /><path d="M9 9l-1 7A7 7 0 0 0 15.800 7z" fill="#fbd023" /><circle cx="9" cy="9" r="3.600" fill="#fff" /><circle cx="9" cy="9" r="2.700" fill="#4a88d8" /></> },
  { art: <><rect x="1.500" y="1.500" width="15" height="15" fill="#1483cf" /><text x="9" y="12" textAnchor="middle" fontSize="9" fontWeight="700" fontFamily="Open Sans, sans-serif" fill="#04213c">Ps</text></> },
  { art: <><rect x="2" y="2" width="8" height="9" fill="#a5d6ef" stroke="#e8f6ff" strokeWidth=".7" transform="rotate(-8 6 6)" /><rect x="5" y="4" width="7" height="9" fill="#b6dd7c" stroke="#eaf6d4" strokeWidth=".6" /><rect x="8.500" y="7.500" width="8" height="8.500" fill="#fbe58a" stroke="#c9ad4a" strokeWidth=".5" transform="rotate(-8 12 11)" /></> },
  { art: <><rect x="11" y="2" width="6" height="13" fill="#eee" /><rect x="13.500" y="8" width="2" height="2" fill="#d22" /><circle cx="8" cy="5" r="3.200" fill="#5c1f9a" /><path d="M2 4l4 4-4 4M14 4l-4 4 4 6M5 8h6l2 8M5 9l-2 7M8 9v6l-2 1" stroke="#3d1180" strokeWidth="1.700" /></> },
  { active: true, stack: true, ink: true },
  { art: <><path d="M1 4.500V1.500h3M14 1.500h3v3M17 13.500v3h-3M4 16.500H1v-3" stroke="#52c3ea" strokeWidth="1.600" /><rect x="2" y="4" width="14" height="10.500" fill="#fff" /><rect x="3" y="5" width="12" height="8.500" fill="#5ba8e0" /><path d="M3 13.500V10c5-1 8 2 12 0v3.500z" fill="#2f5f5c" /></> },
  { art: <><path d="M2 2h12l2 4H4z" fill="#9b1f6a" stroke="#300" strokeWidth=".6" /><path d="M2 7h13l1 4H3z" fill="#2c64c4" stroke="#002" strokeWidth=".6" /><path d="M2 12h13l1 4H3z" fill="#1f9a6a" stroke="#020" strokeWidth=".6" /><path d="M4 6h12M4 11h12M4 16h12" stroke="#fff" strokeWidth="1" /><path d="M6 1v16" stroke="#f0d040" /></> },
  { art: <><rect x="1.500" y="1.500" width="15" height="15" fill="#0f2c48" /><rect x="9" y="8" width="7.500" height="8.500" fill="#000" /><text x="8" y="13.500" textAnchor="middle" fontSize="13" fontFamily="Open Sans, sans-serif" fill="#fff">P</text><path d="M10.500 13.500H12M13.500 13.500H15" stroke="#fff" strokeWidth="1.500" /></> },
  { art: <><circle cx="9.500" cy="9" r="7" fill="#2a66b0" /><path d="M4 3c6-3 12 1 11 7-2-4-5-5-9-4z" fill="#63a5de" /><path d="M3.500 9c2-4 8-3 9 1s-5 6-8 3z" fill="#eceae2" stroke="#666" strokeWidth=".5" /><path d="M4 10l4 1 3-3" stroke="#777" /></> },
];

function TaskButton({ app }) {
  return (
    <div className="flex h-[30px] w-[46px] shrink-0">
      <div
        className={clsx(
          "flex h-[29px] items-center justify-center rounded-[3px] border border-[#3b2556] shadow-[inset_0_0_0_1px_#cdb9de]",
          app.stack ? "w-[37px]" : "w-[44px]",
          app.active
            ? "bg-linear-to-br from-[#f4f0f8] to-[#b99dcd]"
            : "bg-linear-to-br from-[#bfa6d3] via-[#9b79ba] to-[#8a62ab]"
        )}
      >
        {app.ink ? <Inkscape size={17} /> : <Svg size={18}>{app.art}</Svg>}
      </div>
      {app.stack && (
        <>
          <div className="h-[29px] w-[3px] rounded-r-[3px] border-r border-[#3b2556] bg-[#b598cb]" />
          <div className="h-[29px] w-[4px] rounded-r-[3px] border-r border-[#3b2556] bg-[#a888c2]" />
        </>
      )}
    </div>
  );
}

function Taskbar() {
  return (
    <div className="flex h-[30px] shrink-0 border-t border-[#2d1c42] bg-[linear-gradient(90deg,#654886_0%,#6c4d8c_4%,#8860aa_12%,#8a61ab_50%,#956fb4_52%,#8860aa_58%,#8a5fab_80%,#6e5089_83%,#64467f_100%)] text-white shadow-[inset_0_1px_0_#b79bcb]">
      <div className="relative w-[59px] shrink-0">
        <svg width="38" height="36" viewBox="0 0 38 36" className="absolute -top-[6px] left-[8px]">
          <defs>
            <radialGradient id="orb" cx=".5" cy=".95" r=".9">
              <stop offset="0" stopColor="#48e8ff" />
              <stop offset=".4" stopColor="#1a7cb8" />
              <stop offset="1" stopColor="#1d3d68" />
            </radialGradient>
          </defs>
          <circle cx="19" cy="18.500" r="17.500" fill="url(#orb)" stroke="#3b4c78" />
          <path d="M3 15C6 1 32 1 35 15c-9 4-23 4-32 0z" fill="#fff" opacity=".35" />
          <path d="M11.500 9c3-2 5.500-1 8 0l-2 8c-3-1-5.500-1-8.500 0z" fill="#f0662a" />
          <path d="M20.500 9.500c3.500 1.500 6 1 9-.5l-2.500 8.500c-3 1.500-5.500 1.500-8.500 0z" fill="#8ac43a" />
          <path d="M8.500 18.500c3-1.500 5.500-1 8 0l-2 8c-2.500-1.500-5.500-1.500-8.500 0z" fill="#4a9be0" />
          <path d="M18 19c3 1.500 5.500 1.500 8.500 0l-2 8c-3.500 1.500-6 1.500-8.500 0z" fill="#fbc92c" />
        </svg>
      </div>
      {apps.map((app, i) => (
        <TaskButton key={i} app={app} />
      ))}
      <div className="ml-auto flex text-[12px]">
        <span className="w-[30px] pt-[4px] leading-[16px]">DE</span>
        <div className="flex w-[23px] items-center pt-[3px] pl-px"><Arrow dir="up" size={8} color="#fff" /></div>
        <svg width="16" height="18" viewBox="0 0 16 18" fill="none" className="mt-[6px]">
          <path d="M8.500 3H2v12h7.500v-2.500" stroke="#fff" strokeWidth="1.800" />
          <path d="M4.500 6v6.500" stroke="#e6e0ec" strokeWidth="1.500" />
          <path d="M7.500 6h7v3c0 1.800-1.500 2.800-3.500 2.800S7.500 10.800 7.500 9z" fill="#fff" stroke="#4a3560" strokeWidth=".8" />
          <path d="M9.500 2.500V6M12.500 2.500V6M11 11.500V15" stroke="#fff" strokeWidth="1.500" />
        </svg>
        <svg width="16" height="18" viewBox="0 0 16 18" fill="none" className="mt-[6px] ml-[9px]">
          <path d="M2 6h3l4-4v13l-4-4H2z" fill="#fff" stroke="#555" strokeWidth=".6" />
          <path d="M11.500 6c1.300 2 1.300 3.500 0 5.500" stroke="#fff" strokeWidth="1.300" />
        </svg>
        <div className="ml-[7px] flex h-[12px] items-end gap-px self-center">
          <div className="h-[3px] w-[3px] bg-white" />
          <div className="h-[5px] w-[2px] bg-[#b9a8c8]" />
          <div className="h-[7px] w-[2px] bg-[#b9a8c8]" />
          <div className="h-[9px] w-[2px] bg-[#b9a8c8]" />
          <div className="h-[11px] w-[2px] bg-[#b9a8c8]" />
        </div>
        <span className="ml-[32px] w-[53px] pt-[7px] leading-[16px] tracking-[-0.5px]">11:56</span>
        <div className="h-[29px] w-[14px] rounded-[1px] border border-[#3b2556] bg-linear-to-br from-[#a893ba] to-[#5b3f78]" />
      </div>
    </div>
  );
}

export default function App() {
  return (
    <div className={clsx("flex h-[771px] w-[1366px] flex-col overflow-hidden bg-white text-black", UI_FONT)}>
      <Gradients />
      <TitleBar />
      <MenuBar />
      <CommandRow />
      <div className="flex h-[589px] shrink-0 overflow-hidden border-b border-[#9a9a9a]">
        <Toolbox />
        <CanvasArea />
        <LayersDock />
        <RightBars />
      </div>
      <Palette />
      <StatusBar />
      <Taskbar />
    </div>
  );
}
